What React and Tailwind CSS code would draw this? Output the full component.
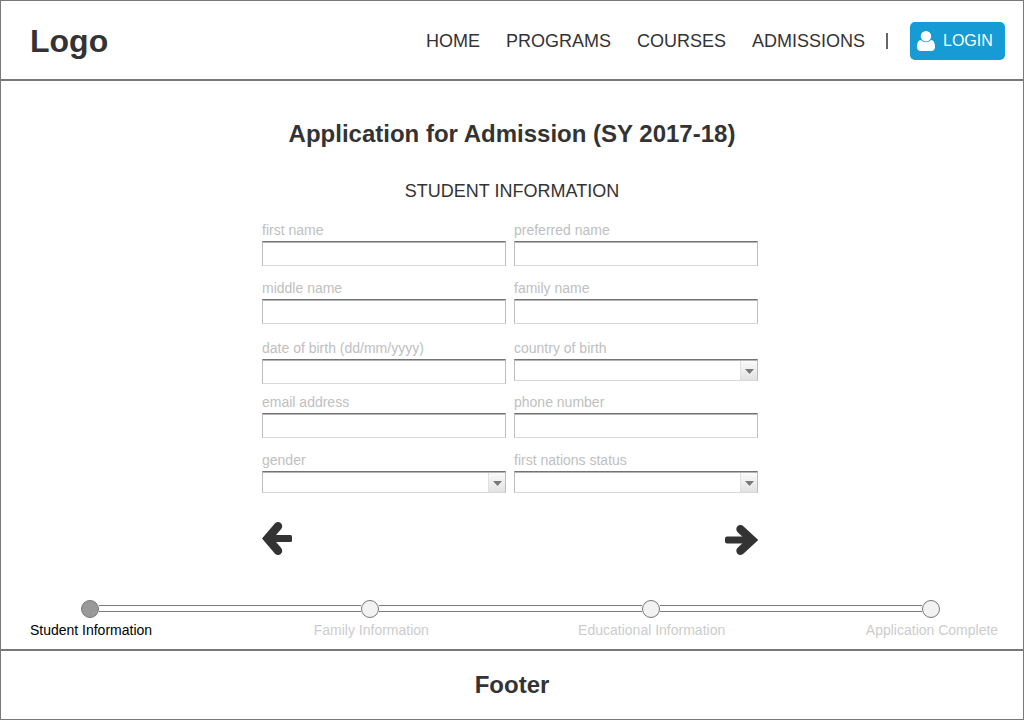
const NAV = ["Home", "Programs", "Courses", "Admissions"];

const ROWS = [
  { space: "mt-0", fields: [{ id: "first-name", label: "first name" }, { id: "preferred-name", label: "preferred name" }] },
  { space: "mt-3.5", fields: [{ id: "middle-name", label: "middle name" }, { id: "family-name", label: "family name" }] },
  {
    space: "mt-4",
    fields: [
      { id: "birth-date", label: "date of birth (dd/mm/yyyy)" },
      { id: "birth-country", label: "country of birth", select: true },
    ],
  },
  { space: "mt-2.5", fields: [{ id: "email", label: "email address" }, { id: "phone", label: "phone number" }] },
  {
    space: "mt-3.5",
    fields: [
      { id: "gender", label: "gender", select: true },
      { id: "first-nations", label: "first nations status", select: true },
    ],
  },
];

const STEPS = ["Student Information", "Family Information", "Educational Information", "Application Complete"];

const BOX =
  "block w-full appearance-none rounded-none border border-x-[#bcbcbc] border-t-[#737373] border-b-[#d8d8d8] bg-white px-2 text-sm text-[#333333] shadow-[inset_0_1px_0_#b4b4b4]";

function Field({ id, label, select }) {
  return (
    <div className="min-w-0 flex-1">
      <label htmlFor={id} className="mb-[3px] block text-sm leading-4 text-[#c0c0c0]">
        {label}
      </label>
      {select ? (
        <div className="relative">
          <select id={id} className={`${BOX} h-[22px]`} />
          <span className="pointer-events-none absolute top-[2px] right-px bottom-px flex w-[17px] items-center justify-center border-l border-[#e0e0e0] bg-linear-to-b from-[#fafafa] to-[#e2e2e2]">
            <svg className="mt-0.5 h-[5px] w-[9px] fill-[#787878]" viewBox="0 0 9 5" aria-hidden="true">
              <path d="M0 0h9L4.500 5z" />
            </svg>
          </span>
        </div>
      ) : (
        <input id={id} type="text" className={`${BOX} h-[25px]`} />
      )}
    </div>
  );
}

function UserIcon() {
  return (
    <svg className="h-5 w-[18px] fill-white" viewBox="0 0 18 20" aria-hidden="true">
      <ellipse cx="9" cy="5.200" rx="5.200" ry="5.200" />
      <path d="M4 9C1.300 9.200 0 11.500 0 16.300C0 18.700 1.500 20 3.700 20H14.300C16.500 20 18 18.700 18 16.300C18 11.500 16.700 9.200 14 9C12.700 10.500 10.900 11.200 9 11.200S5.300 10.500 4 9Z" />
    </svg>
  );
}

function BackIcon() {
  return (
    <svg className="h-[33px] w-[30px]" viewBox="0 0 30 33" aria-hidden="true">
      <path d="M16 4.200L5.500 16.500L16 28.800" fill="none" stroke="#333333" strokeWidth="8.400" strokeLinecap="round" strokeLinejoin="miter" />
      <path d="M6 13H28.500Q30 13 30 14.500V18.500Q30 20 28.500 20H6Z" fill="#333333" />
    </svg>
  );
}

function ForwardIcon() {
  return (
    <svg className="h-[30px] w-[33px]" viewBox="0 0 33 30" aria-hidden="true">
      <path d="M15.500 4.200L27 15L15.500 25.800" fill="none" stroke="#333333" strokeWidth="8.400" strokeLinecap="round" strokeLinejoin="miter" />
      <path d="M27 11.500H2Q0 11.500 0 13.500V16.500Q0 18.500 2 18.500H27Z" fill="#333333" />
    </svg>
  );
}

export default function App() {
  return (
    <div className="flex min-h-screen flex-col border border-[#797979] bg-white font-['Liberation_Sans',Arial,sans-serif] text-[#333333]">
      <header className="flex items-center justify-between border-b-2 border-[#797979] pt-[21px] pr-[18px] pb-[19px] pl-[29px]">
        <a href="#" className="text-[32px] leading-[38px] font-bold">
          Logo
        </a>
        <div className="flex items-center">
          <nav className="flex gap-[26px] text-lg leading-6 uppercase">
            {NAV.map((item) => (
              <a key={item} href="#">
                {item}
              </a>
            ))}
          </nav>
          <span className="ml-[21px] h-4 w-0.5 bg-[#666666]" />
          <button type="button" className="ml-[22px] flex h-[38px] w-[95px] items-center gap-2 rounded-[5px] bg-[#169bd5] pl-[7px] text-base text-white">
            <UserIcon />
            LOGIN
          </button>
        </div>
      </header>

      <main className="flex flex-1 flex-col pt-[39px]">
        <h1 className="text-center text-2xl leading-7 font-bold">Application for Admission (SY 2017-18)</h1>
        <h2 className="mt-[31px] mb-[19px] text-center text-lg leading-6">STUDENT INFORMATION</h2>
        <div className="flex justify-center pr-1">
          <form className="w-full max-w-[496px]" onSubmit={(e) => e.preventDefault()}>
            {ROWS.map(({ space, fields }) => (
              <div key={fields[0].id} className={`flex items-start gap-2 ${space}`}>
                {fields.map((field) => (
                  <Field key={field.id} {...field} />
                ))}
              </div>
            ))}
            <div className="mt-[29px] flex items-end justify-between">
              <button type="button" aria-label="Previous step">
                <BackIcon />
              </button>
              <button type="button" aria-label="Next step">
                <ForwardIcon />
              </button>
            </div>
          </form>
        </div>

        <ol className="mt-auto mr-[83px] mb-[11px] ml-20 flex">
          {STEPS.map((step, i) => (
            <li key={step} className={i < STEPS.length - 1 ? "flex flex-1" : "flex"}>
              <div className="flex w-[18px] flex-col items-center">
                <span className={`size-[18px] rounded-full border border-[#797979] ${i === 0 ? "bg-[#999999]" : "bg-[#f2f2f2]"}`} />
                <span className={`mt-1 pl-0.5 text-sm leading-4 whitespace-nowrap ${i === 0 ? "text-black" : "text-[#cccccc]"}`}>{step}</span>
              </div>
              {i < STEPS.length - 1 && <span className="mt-[5px] h-[7px] flex-1 border-y border-[#797979]" />}
            </li>
          ))}
        </ol>
      </main>

      <footer className="border-t-2 border-[#797979] py-5 text-center text-2xl leading-7 font-bold">Footer</footer>
    </div>
  );
}
